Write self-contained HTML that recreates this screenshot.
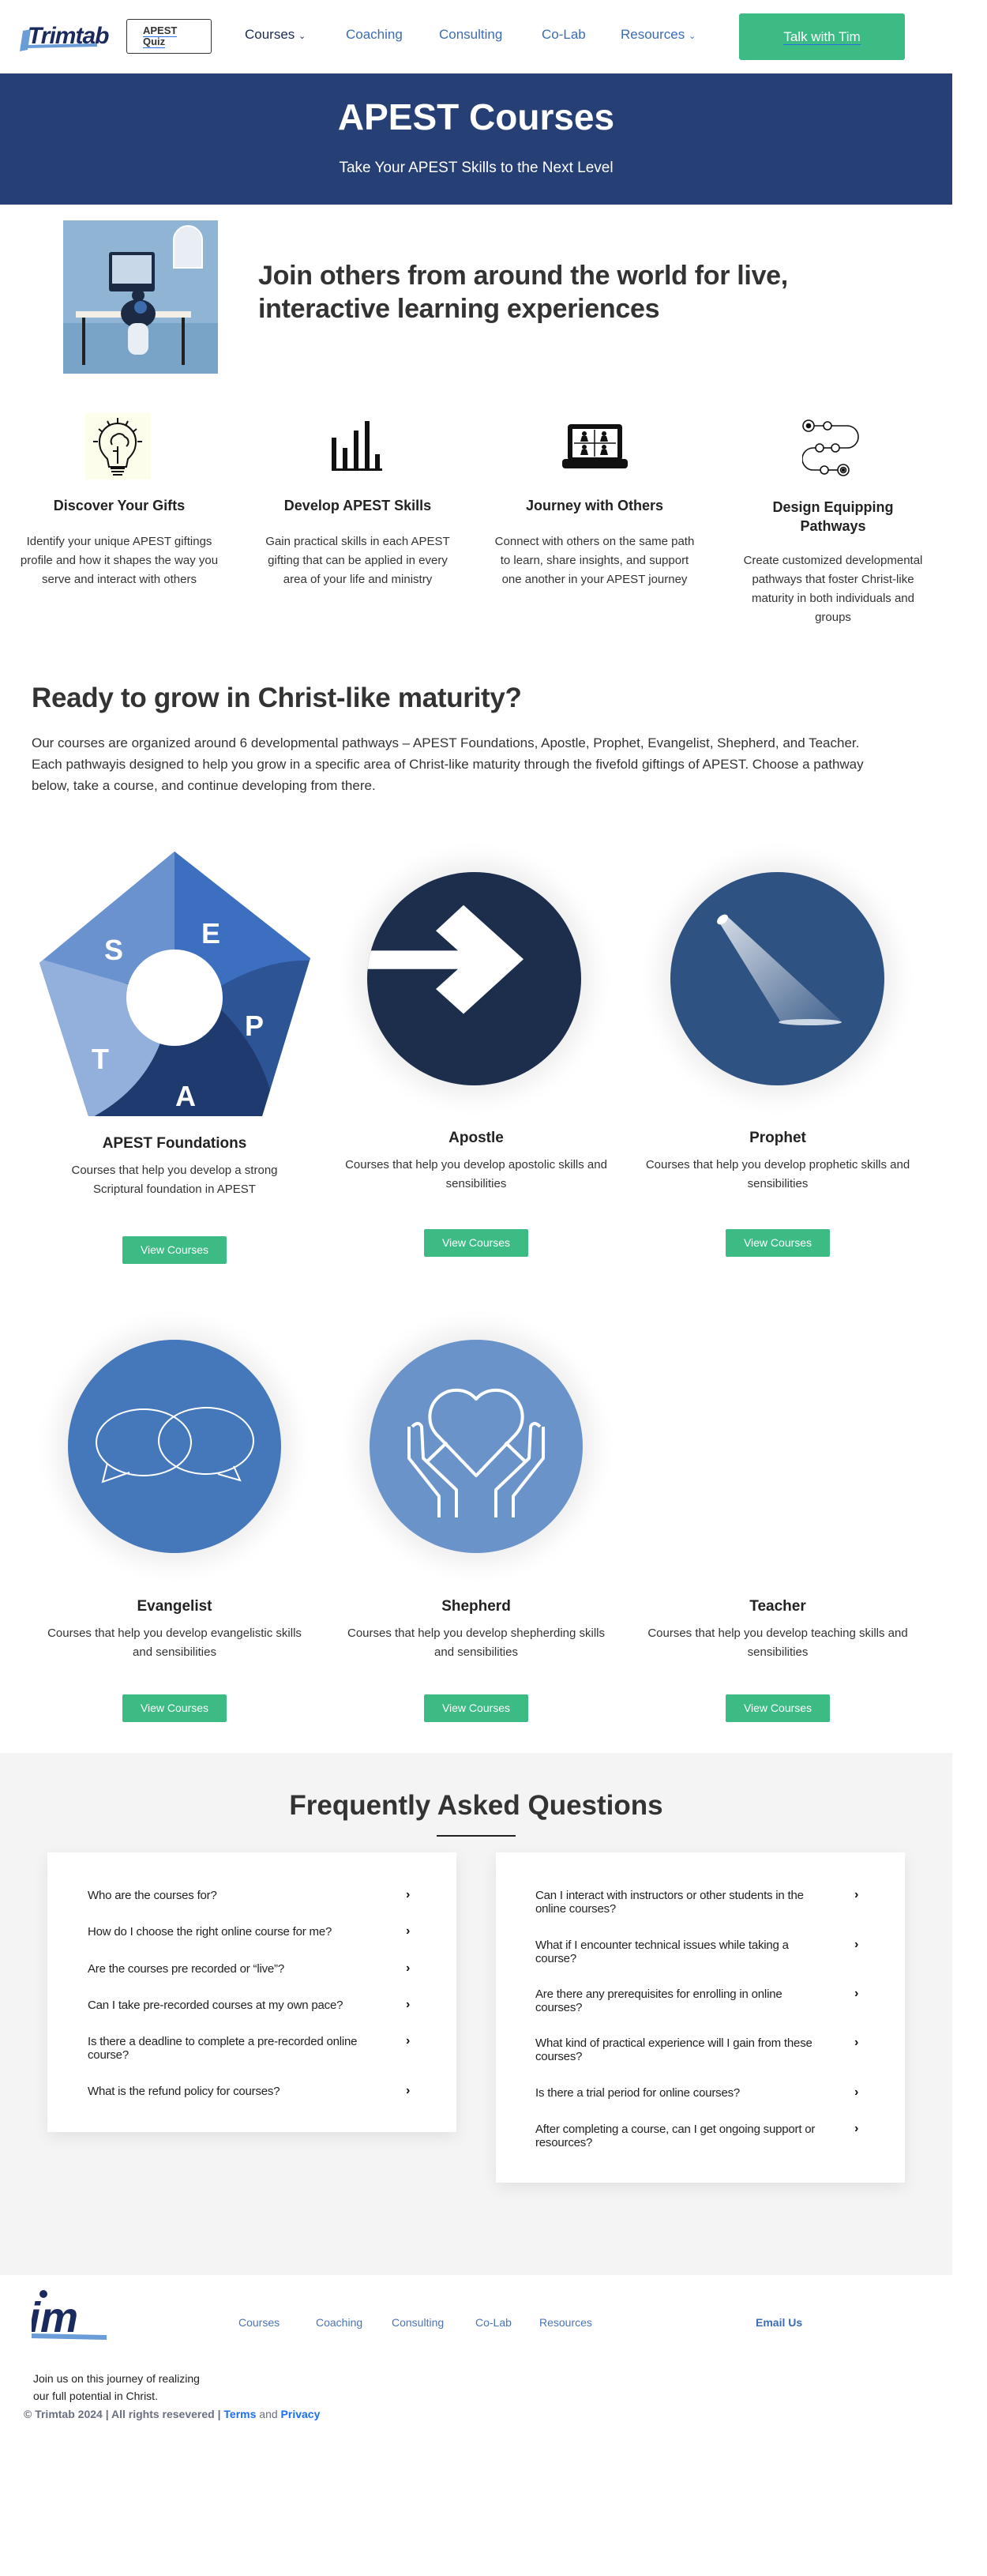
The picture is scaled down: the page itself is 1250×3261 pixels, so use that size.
<!DOCTYPE html>
<html><head><meta charset="utf-8">
<style>
*{margin:0;padding:0;box-sizing:border-box}
body{width:1250px;height:3261px;background:#fff;font-family:"Liberation Sans",sans-serif;color:#333;position:relative;overflow:hidden}
.a{position:absolute}
.nav{font-size:17px;color:#3b6cb5;top:34px}
.c{text-align:center}
.h3{font-weight:bold;font-size:19px;color:#222}
.d{font-size:15px;line-height:24px;color:#333}
.btn{background:#3dbb85;color:#fff;font-size:14px;text-align:center;width:132px;height:35px;line-height:35px;border-radius:2px}
.glow{border-radius:50%;box-shadow:0 0 30px 14px rgba(0,0,0,0.07)}
.q{font-size:15px;color:#222;line-height:17px;letter-spacing:-0.2px}
.ch{font-weight:bold;font-size:16px;color:#111}
.fl{font-size:14px;color:#4a74b8;top:2932px}
</style></head><body>

<!-- header -->
<svg class="a" style="left:23px;top:25px" width="118" height="42" viewBox="0 0 118 42">
<polygon points="6,14 16,12 12,38 2,40" fill="#6a9cd8"/>
<text x="12" y="30" font-family="Liberation Sans" font-weight="bold" font-style="italic" font-size="30" fill="#1b2a5e" letter-spacing="-1">Trimtab</text>
<polygon points="10,32 100,30 100,34 10,36" fill="#6a9cd8"/>
</svg>
<div class="a" style="left:160px;top:24px;width:108px;height:44px;border:1.5px solid #333;border-radius:3px"></div>
<div class="a" style="left:181px;top:32px;font-size:13px;font-weight:bold;line-height:14px;color:#333"><span style="border-bottom:1.5px solid #2a6ee8">APEST</span><br><span style="border-bottom:1.5px solid #2a6ee8">Quiz</span></div>
<div class="a nav" style="left:310px;color:#1b2a52">Courses <span style="font-size:11px">&#8964;</span></div>
<div class="a nav" style="left:438px">Coaching</div>
<div class="a nav" style="left:556px">Consulting</div>
<div class="a nav" style="left:686px">Co-Lab</div>
<div class="a nav" style="left:786px">Resources <span style="font-size:11px">&#8964;</span></div>
<div class="a" style="left:936px;top:17px;width:210px;height:59px;background:#3dbb85;border-radius:3px;color:#fff;font-size:17px;text-align:center;line-height:59px"><span style="border-bottom:1px solid #2a6ee8">Talk with Tim</span></div>

<!-- banner -->
<div class="a" style="left:0;top:93px;width:1206px;height:166px;background:#263f75"></div>
<div class="a c" style="left:0;top:121px;width:1206px;color:#fff;font-weight:bold;font-size:46px">APEST Courses</div>
<div class="a c" style="left:0;top:202px;width:1206px;color:#fff;font-size:19px">Take Your APEST Skills to the Next Level</div>

<!-- intro -->
<svg class="a" style="left:80px;top:279px" width="196" height="194" viewBox="0 0 196 194">
<rect width="196" height="194" fill="#8fb4d4"/>
<rect x="0" y="130" width="196" height="64" fill="#7aa3c8"/>
<path d="M140 60 v-35 a18 18 0 0 1 36 0 v35z" fill="#e8eef4" stroke="#fff" stroke-width="2"/>
<rect x="58" y="40" width="58" height="50" rx="3" fill="#1d2a44"/>
<rect x="62" y="44" width="50" height="36" fill="#c9d8e8"/>
<rect x="16" y="115" width="146" height="8" fill="#f3efe6"/>
<rect x="24" y="123" width="4" height="60" fill="#222"/><rect x="150" y="123" width="4" height="60" fill="#222"/>
<ellipse cx="95" cy="118" rx="22" ry="18" fill="#1d2a44"/>
<circle cx="95" cy="95" r="8" fill="#1d2a44"/>
<rect x="82" y="130" width="26" height="40" rx="10" fill="#e8eef4"/>
<circle cx="98" cy="110" r="8" fill="#3c6cab"/>
</svg>
<div class="a" style="left:327px;top:328px;font-weight:bold;font-size:34px;line-height:42px;color:#333;letter-spacing:-0.3px">Join others from around the world for live,<br>interactive learning experiences</div>

<!-- 4 features -->
<div class="a" style="left:108px;top:523px;width:83px;height:84px;background:#fdfdec"></div>
<svg class="a" style="left:108px;top:523px" width="83" height="84" viewBox="0 0 83 84" fill="none" stroke="#111" stroke-width="2">
<path d="M28 58 C20 50 18 44 18 36 A23 23 0 0 1 64 36 C64 44 62 50 54 58 L52 68 H30Z"/>
<path d="M32 70h18M33 74h16M35 78h12"/>
<path d="M34 40 a8 8 0 0 1 4 -12 a8 8 0 0 1 12 2 a7 7 0 0 1 2 12 M41 42 v22 M41 48 h-6"/>
<path d="M41 6v8M28 10l3 6M54 10l-3 6M17 20l5 4M65 20l-5 4M10 36h6M66 36h6"/>
</svg>
<svg class="a" style="left:420px;top:533px" width="64" height="63" viewBox="0 0 64 63" fill="#111">
<rect x="0" y="21" width="6" height="40"/><rect x="14" y="34" width="6" height="27"/><rect x="28" y="12" width="6" height="49"/><rect x="42" y="0" width="6" height="61"/><rect x="55" y="42" width="6" height="19"/><rect x="0" y="60" width="64" height="3"/>
</svg>
<svg class="a" style="left:712px;top:537px" width="83" height="56" viewBox="0 0 83 56">
<rect x="7" y="0" width="69" height="46" rx="4" fill="#111"/>
<rect x="13" y="6" width="57" height="36" fill="#fff"/>
<rect x="0" y="44" width="83" height="12" rx="4" fill="#111"/>
<path d="M41 7v34M15 24h53" stroke="#111" stroke-width="1.5"/>
<g fill="#111"><circle cx="28" cy="12" r="3"/><path d="M23 22 h10 l-2-7h-6z"/><circle cx="53" cy="12" r="3"/><path d="M48 22 h10 l-2-7h-6z"/><circle cx="28" cy="29" r="3"/><path d="M23 39 h10 l-2-7h-6z"/><circle cx="53" cy="29" r="3"/><path d="M48 39 h10 l-2-7h-6z"/></g>
</svg>
<svg class="a" style="left:1016px;top:531px" width="78" height="72" viewBox="0 0 78 72" fill="none" stroke="#111" stroke-width="1.6">
<circle cx="8" cy="8" r="7"/><circle cx="8" cy="8" r="2.5" fill="#111"/><circle cx="32" cy="8" r="5"/>
<path d="M15 8h12M37 8h20a14 14 0 0 1 0 28h-10"/>
<circle cx="42" cy="36" r="5"/><circle cx="22" cy="36" r="5"/><path d="M27 36h10"/>
<path d="M17 36h-3a14 14 0 0 0 0 28h9"/>
<circle cx="28" cy="64" r="5"/><circle cx="52" cy="64" r="7"/><circle cx="52" cy="64" r="3.5"/><circle cx="52" cy="64" r="1.5" fill="#111"/><path d="M33 64h12"/>
</svg>

<div class="a c h3" style="left:0;top:630px;width:302px;font-size:18px">Discover Your Gifts</div>
<div class="a c h3" style="left:302px;top:630px;width:302px;font-size:18px">Develop APEST Skills</div>
<div class="a c h3" style="left:602px;top:630px;width:302px;font-size:18px">Journey with Others</div>
<div class="a c h3" style="left:904px;top:630px;width:302px;font-size:18px;line-height:24px">Design Equipping<br>Pathways</div>
<div class="a c d" style="left:0;top:674px;width:302px;white-space:nowrap">Identify your unique APEST giftings<br>profile and how it shapes the way you<br>serve and interact with others</div>
<div class="a c d" style="left:302px;top:674px;width:302px;white-space:nowrap">Gain practical skills in each APEST<br>gifting that can be applied in every<br>area of your life and ministry</div>
<div class="a c d" style="left:602px;top:674px;width:302px;white-space:nowrap">Connect with others on the same path<br>to learn, share insights, and support<br>one another in your APEST journey</div>
<div class="a c d" style="left:904px;top:698px;width:302px;white-space:nowrap">Create customized developmental<br>pathways that foster Christ-like<br>maturity in both individuals and<br>groups</div>

<div class="a" style="left:40px;top:864px;font-weight:bold;font-size:35px;color:#333;letter-spacing:-0.3px">Ready to grow in Christ-like maturity?</div>
<div class="a" style="left:40px;top:927px;width:1160px;font-size:17px;line-height:27px;color:#333;white-space:nowrap">Our courses are organized around 6 developmental pathways – APEST Foundations, Apostle, Prophet, Evangelist, Shepherd, and Teacher.<br>Each pathwayis designed to help you grow in a specific area of Christ-like maturity through the fivefold giftings of APEST. Choose a pathway<br>below, take a course, and continue developing from there.</div>

<!-- pentagon -->
<svg class="a" style="left:50px;top:1078px" width="344" height="336" viewBox="0 0 344 336">
<defs><clipPath id="pg"><polygon points="171,0 343,135 282,335 62,335 0,141"/></clipPath></defs>
<g clip-path="url(#pg)">
<rect width="344" height="336" fill="#2d5494"/>
<path d="M171 185 L171 -20 L-20 -20 L-20 130 Q60 165 140 170Z" fill="#6a92cf"/>
<path d="M171 185 L171 -20 L360 -20 L360 140 Q300 130 230 170Z" fill="#3d6fc1"/>
<path d="M171 185 L-20 130 L-20 360 L60 360 Q140 300 160 220Z" fill="#93b0dd"/>
<path d="M171 185 L160 220 Q140 300 60 340 L300 340 Q290 260 230 200Z" fill="#1f3a6e"/>
</g>
<circle cx="171" cy="185" r="61" fill="#fff"/>
<g font-family="Liberation Sans" font-weight="bold" font-size="36" fill="#fff">
<text x="82" y="137">S</text><text x="205" y="116">E</text><text x="260" y="233">P</text><text x="66" y="275">T</text><text x="172" y="322">A</text></g>
</svg>

<!-- circles -->
<div class="a glow" style="left:465px;top:1104px;width:271px;height:270px;background:#1c2e4c;overflow:hidden">
<svg width="271" height="270" viewBox="0 0 271 270"><polygon points="0,86 115,86 87,58 122,22 198,98 122,175 87,140 115,112 0,112" fill="#fff" transform="translate(0,22) scale(1,0.9)"/></svg></div>
<div class="a glow" style="left:849px;top:1104px;width:271px;height:270px;background:#2e5282;overflow:hidden">
<svg width="271" height="270" viewBox="0 0 271 270"><defs><linearGradient id="lg" x1="0" y1="0" x2="1" y2="1"><stop offset="0" stop-color="#fff" stop-opacity=".8"/><stop offset="1" stop-color="#fff" stop-opacity=".1"/></linearGradient></defs>
<polygon points="62,64 72,56 216,188 140,190" fill="url(#lg)"/><ellipse cx="66" cy="60" rx="8" ry="5" fill="#fff" transform="rotate(-40 66 60)"/><ellipse cx="177" cy="190" rx="40" ry="4" fill="#cdd8e6"/></svg></div>
<div class="a glow" style="left:86px;top:1696px;width:270px;height:270px;background:#4577bb">
<svg width="270" height="270" viewBox="0 0 270 270" fill="none" stroke="#fff" stroke-width="2"><ellipse cx="96" cy="130" rx="60" ry="42"/><path d="M50 156 L44 180 L78 168"/><ellipse cx="175" cy="128" rx="60" ry="42"/><path d="M210 160 L218 178 L190 170"/></svg></div>
<div class="a glow" style="left:468px;top:1696px;width:270px;height:270px;background:#6a93c9">
<svg width="270" height="270" viewBox="0 0 270 270" fill="none" stroke="#fff" stroke-width="4" stroke-linejoin="round"><path d="M135 172 L85 120 A30 30 0 0 1 135 75 A30 30 0 0 1 185 120Z"/><path d="M50 110 L50 150 L88 198 L88 225 M54 110 q8 -8 12 0 L68 150 L110 190 L110 225 M72 155 L98 130"/><path d="M220 110 L220 150 L182 198 L182 225 M216 110 q-8 -8 -12 0 L202 150 L160 190 L160 225 M198 155 L172 130"/></svg></div>

<!-- card texts -->
<div class="a c h3" style="left:71px;top:1437px;width:300px">APEST Foundations</div>
<div class="a c d" style="left:71px;top:1470px;width:300px">Courses that help you develop a strong Scriptural foundation in APEST</div>
<div class="a btn" style="left:155px;top:1565px">View Courses</div>
<div class="a c h3" style="left:453px;top:1430px;width:300px">Apostle</div>
<div class="a c d" style="left:433px;top:1463px;width:340px">Courses that help you develop apostolic skills and sensibilities</div>
<div class="a btn" style="left:537px;top:1556px">View Courses</div>
<div class="a c h3" style="left:835px;top:1430px;width:300px">Prophet</div>
<div class="a c d" style="left:815px;top:1463px;width:340px">Courses that help you develop prophetic skills and sensibilities</div>
<div class="a btn" style="left:919px;top:1556px">View Courses</div>

<div class="a c h3" style="left:71px;top:2023px;width:300px">Evangelist</div>
<div class="a c d" style="left:51px;top:2056px;width:340px">Courses that help you develop evangelistic skills and sensibilities</div>
<div class="a btn" style="left:155px;top:2145px">View Courses</div>
<div class="a c h3" style="left:453px;top:2023px;width:300px">Shepherd</div>
<div class="a c d" style="left:433px;top:2056px;width:340px">Courses that help you develop shepherding skills and sensibilities</div>
<div class="a btn" style="left:537px;top:2145px">View Courses</div>
<div class="a c h3" style="left:835px;top:2023px;width:300px">Teacher</div>
<div class="a c d" style="left:815px;top:2056px;width:340px">Courses that help you develop teaching skills and sensibilities</div>
<div class="a btn" style="left:919px;top:2145px">View Courses</div>

<!-- FAQ -->
<div class="a" style="left:0;top:2219px;width:1206px;height:661px;background:#f4f4f4"></div>
<div class="a c" style="left:0;top:2266px;width:1206px;font-weight:bold;font-size:35px;color:#333">Frequently Asked Questions</div>
<div class="a" style="left:553px;top:2323px;width:100px;height:2px;background:#222"></div>
<div class="a" style="left:60px;top:2345px;width:518px;height:354px;background:#fff;box-shadow:0 6px 18px rgba(0,0,0,0.08)"></div>
<div class="a" style="left:628px;top:2345px;width:518px;height:418px;background:#fff;box-shadow:0 6px 18px rgba(0,0,0,0.08)"></div>

<div class="a q" style="left:111px;top:2391px">Who are the courses for?</div>
<div class="a q" style="left:111px;top:2437px">How do I choose the right online course for me?</div>
<div class="a q" style="left:111px;top:2484px">Are the courses pre recorded or “live”?</div>
<div class="a q" style="left:111px;top:2530px">Can I take pre-recorded courses at my own pace?</div>
<div class="a q" style="left:111px;top:2576px;white-space:nowrap">Is there a deadline to complete a pre-recorded online<br>course?</div>
<div class="a q" style="left:111px;top:2639px">What is the refund policy for courses?</div>
<div class="a ch" style="left:514px;top:2390px">›</div><div class="a ch" style="left:514px;top:2436px">›</div><div class="a ch" style="left:514px;top:2483px">›</div><div class="a ch" style="left:514px;top:2529px">›</div><div class="a ch" style="left:514px;top:2575px">›</div><div class="a ch" style="left:514px;top:2638px">›</div>

<div class="a q" style="left:678px;top:2391px;white-space:nowrap">Can I interact with instructors or other students in the<br>online courses?</div>
<div class="a q" style="left:678px;top:2454px;white-space:nowrap">What if I encounter technical issues while taking a<br>course?</div>
<div class="a q" style="left:678px;top:2516px;white-space:nowrap">Are there any prerequisites for enrolling in online<br>courses?</div>
<div class="a q" style="left:678px;top:2578px;white-space:nowrap">What kind of practical experience will I gain from these<br>courses?</div>
<div class="a q" style="left:678px;top:2641px">Is there a trial period for online courses?</div>
<div class="a q" style="left:678px;top:2687px;white-space:nowrap">After completing a course, can I get ongoing support or<br>resources?</div>
<div class="a ch" style="left:1082px;top:2390px">›</div><div class="a ch" style="left:1082px;top:2453px">›</div><div class="a ch" style="left:1082px;top:2515px">›</div><div class="a ch" style="left:1082px;top:2577px">›</div><div class="a ch" style="left:1082px;top:2640px">›</div><div class="a ch" style="left:1082px;top:2686px">›</div>

<!-- footer -->
<svg class="a" style="left:40px;top:2898px" width="95" height="64" viewBox="0 0 95 64">
<circle cx="15" cy="6" r="5" fill="#1b2a5e"/>
<text x="-4" y="54" font-family="Liberation Sans" font-weight="bold" font-style="italic" font-size="54" fill="#1b2a5e">im</text>
<polygon points="0,56 95,58 95,64 0,62" fill="#6a9cd8"/>
</svg>
<div class="a fl" style="left:302px">Courses</div>
<div class="a fl" style="left:400px">Coaching</div>
<div class="a fl" style="left:496px">Consulting</div>
<div class="a fl" style="left:602px">Co-Lab</div>
<div class="a fl" style="left:683px">Resources</div>
<div class="a fl" style="left:957px;font-weight:bold;color:#3b6cb5">Email Us</div>
<div class="a" style="left:42px;top:3000px;font-size:14px;line-height:22px;color:#222">Join us on this journey of realizing<br>our full potential in Christ.</div>
<div class="a" style="left:30px;top:3048px;font-size:14px;font-weight:bold;color:#6b6f80">© Trimtab 2024 | All rights resevered | <span style="color:#1a6ef0">Terms</span> <span style="font-weight:normal">and</span> <span style="color:#1a6ef0">Privacy</span></div>
</body></html>
